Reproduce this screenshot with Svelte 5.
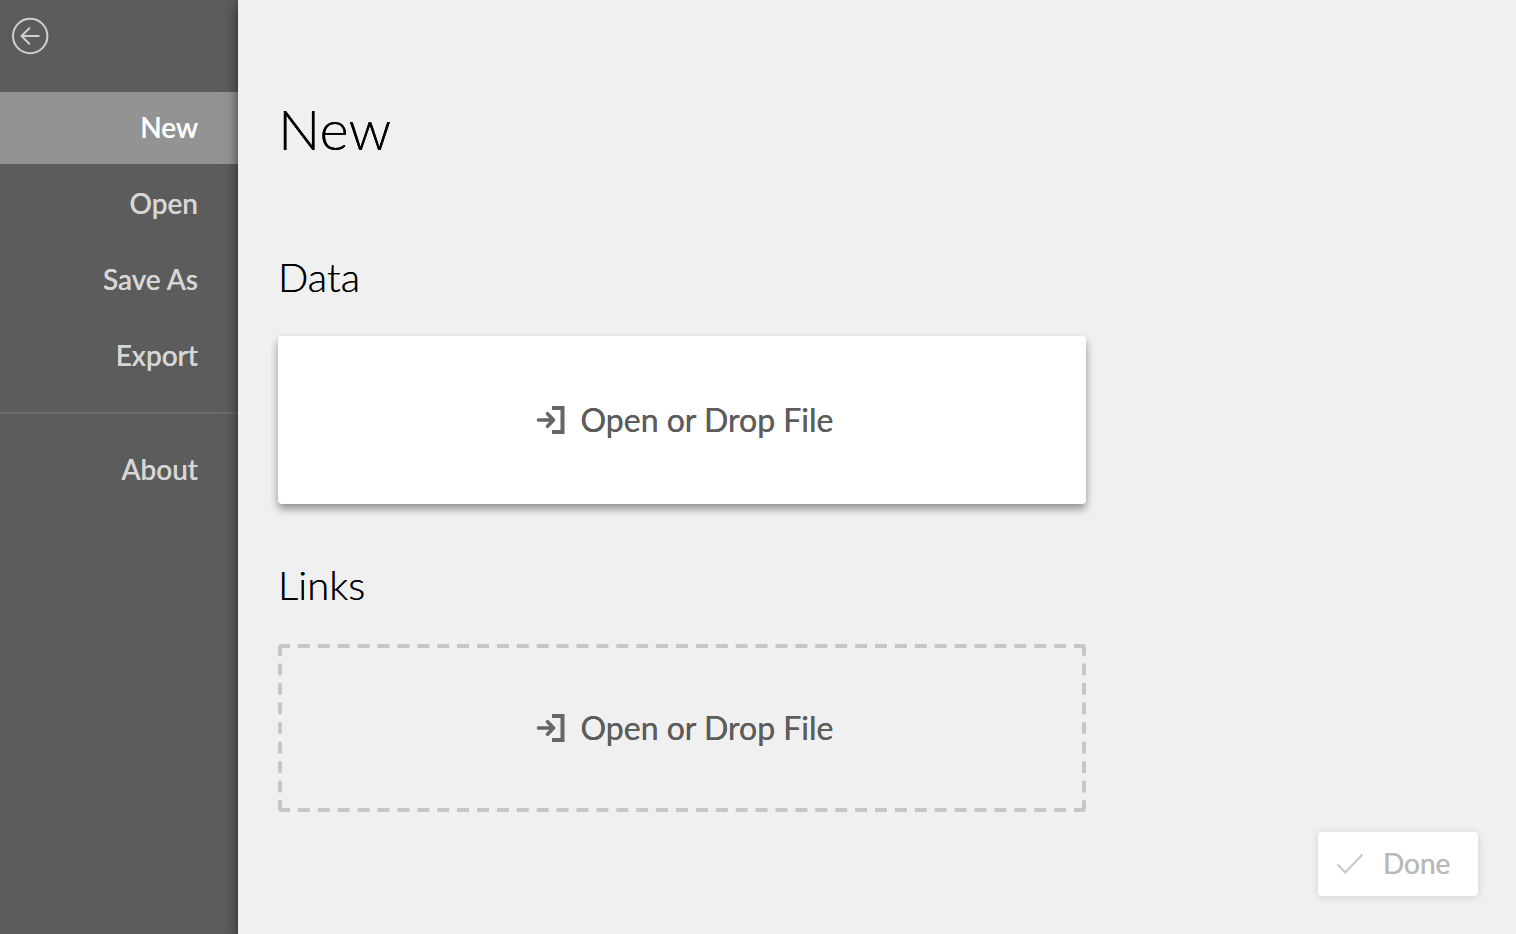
<script>
  const items = ['New', 'Open', 'Save As', 'Export'];
  let active = $state('New');
</script>

{#snippet importIcon()}
  <svg class="import" viewBox="0 0 40 40" fill="none" stroke="currentColor" aria-hidden="true">
    <path d="M7.500 20H22M16.500 13.700L22.500 20L16.500 26.300" stroke-width="3.600" stroke-linecap="round" stroke-linejoin="round" />
    <path d="M21.500 8H32V32H21.500" stroke-width="4" transform="translate(-.5 0)" />
  </svg>
{/snippet}

<div class="page">
  <aside>
    <button class="back" aria-label="Back">
      <svg viewBox="0 0 40 40" fill="none" stroke="currentColor" stroke-width="2" stroke-linecap="round" stroke-linejoin="round" aria-hidden="true">
        <circle cx="20.200" cy="20" r="17.200" />
        <path d="M28.700 20H11.500M19.300 12.300L11.500 20L19.300 27.700" />
      </svg>
    </button>
    <nav>
      {#each items as item}
        <button class="item" class:active={active === item} onclick={() => (active = item)}>{item}</button>
      {/each}
      <hr />
      <button class="item" class:active={active === 'About'} onclick={() => (active = 'About')}>About</button>
    </nav>
  </aside>
  <main>
    <h1>New</h1>
    <section>
      <h2>Data</h2>
      <button class="drop filled">{@render importIcon()}<span>Open or Drop File</span></button>
    </section>
    <section>
      <h2>Links</h2>
      <button class="drop dashed">
        <svg class="outline" aria-hidden="true">
          <line x1="0" y1="0" x2="100%" y2="0" pathLength="812" />
          <line x1="0" y1="100%" x2="100%" y2="100%" pathLength="812" />
          <line x1="0" y1="0" x2="0" y2="100%" pathLength="172" />
          <line x1="100%" y1="0" x2="100%" y2="100%" pathLength="172" />
        </svg>
        {@render importIcon()}<span>Open or Drop File</span>
      </button>
    </section>
    <button class="done" disabled>
      <svg viewBox="0 0 28 28" fill="none" stroke="#c8c8c8" stroke-width="2" aria-hidden="true"><path d="M1.500 15.500L9.300 23.500L26.500 5.500" /></svg>
      <span>Done</span>
    </button>
  </main>
</div>

<style>
  :global(body) { margin: 0; background: #f0f0f0; }
  button { font: inherit; border: 0; padding: 0; background: none; cursor: pointer; text-shadow: 0 0 0 currentColor; }
  .page { display: flex; min-height: 100vh; overflow: hidden; font-family: Lato, sans-serif; }
  aside { width: 238px; flex: none; background: #5c5c5c; }
  .back { display: block; width: 40px; height: 40px; margin: 16px 10px 36px; color: #d0d0d0; }
  .back svg { display: block; width: 40px; height: 40px; }
  nav { display: flex; flex-direction: column; gap: 4px; }
  .item { height: 72px; padding: 0 40px 2px 0; text-align: right; font-size: 28px; font-weight: 500; color: #d6d6d6; }
  .item.active { background: #939393; color: #fff; }
  hr { width: 100%; height: 2px; margin: 16px 0; border: 0; background: #696969; }
  main { position: relative; flex: 1; display: flex; flex-direction: column; padding: 96px 38px 38px 40px; background: #f0f0f0; box-shadow: 0 4px 12px #0009; }
  h1, h2 { color: #000; text-shadow: 0 0 0 currentColor; }
  h1 { margin: 0 0 90px; font-size: 56px; line-height: 66px; font-weight: 300; }
  h2 { margin: 0 0 34px; font-size: 40px; line-height: 50px; font-weight: 300; }
  section { margin-bottom: 56px; max-width: 808px; }
  section:last-of-type { margin-bottom: 20px; }
  .drop { position: relative; width: 100%; height: 168px; display: flex; align-items: center; justify-content: center; gap: 10px; border-radius: 4px; font-size: 32px; color: #5c5c5c; }
  .drop span { padding-bottom: 2px; }
  .filled { background: #fff; box-shadow: 0 5px 8px #0006; }
  .dashed { overflow: hidden; }
  .outline { position: absolute; inset: 0; width: 100%; height: 100%; stroke: #c6c6c6; stroke-width: 8px; stroke-dasharray: 12 8; }
  .import { width: 40px; height: 40px; color: #666; }
  .done { align-self: flex-end; width: 160px; height: 64px; display: flex; align-items: center; gap: 19px; padding: 0 0 2px 18px; border-radius: 4px; background: #fff; box-shadow: 0 1px 8px #0002; font-size: 28px; color: #b9b9b9; box-sizing: border-box; }
  .done svg { width: 28px; height: 28px; }
</style>
